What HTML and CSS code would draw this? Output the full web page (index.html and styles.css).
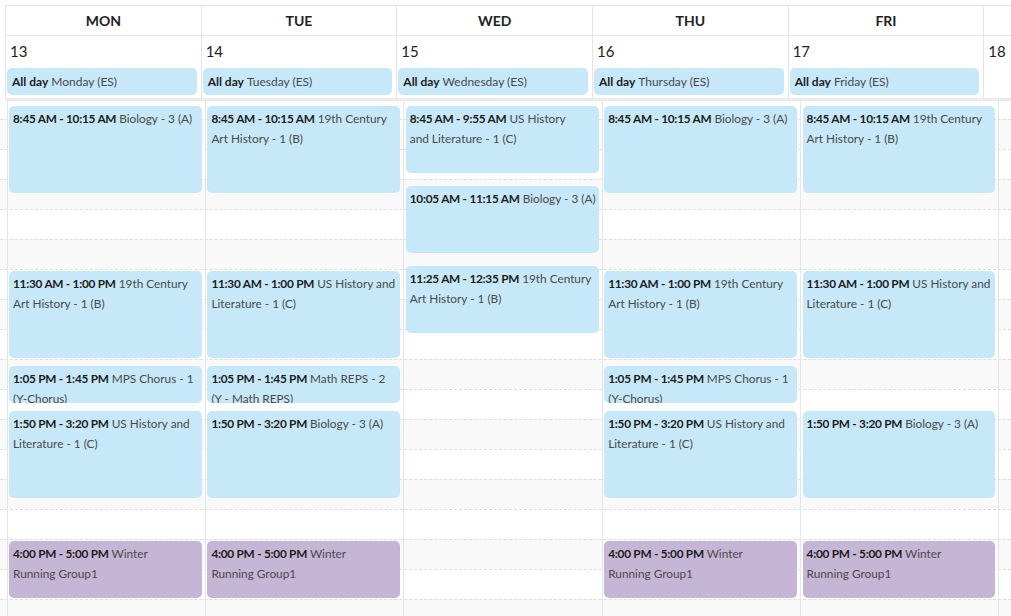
FILE: index.html
```html
<!DOCTYPE html>
<html>
<head>
<meta charset="utf-8">
<link rel="stylesheet" href="styles.css">
</head>
<body>
<div class="calendar">
  <div class="header">
    <div class="hcol">
      <div class="dayname">MON</div>
      <div class="date">13</div>
      <div class="allday"><b>All day</b> Monday (ES)</div>
    </div>
    <div class="hcol">
      <div class="dayname">TUE</div>
      <div class="date">14</div>
      <div class="allday"><b>All day</b> Tuesday (ES)</div>
    </div>
    <div class="hcol">
      <div class="dayname">WED</div>
      <div class="date">15</div>
      <div class="allday"><b>All day</b> Wednesday (ES)</div>
    </div>
    <div class="hcol">
      <div class="dayname">THU</div>
      <div class="date">16</div>
      <div class="allday"><b>All day</b> Thursday (ES)</div>
    </div>
    <div class="hcol">
      <div class="dayname">FRI</div>
      <div class="date">17</div>
      <div class="allday"><b>All day</b> Friday (ES)</div>
    </div>
    <div class="hcol">
      <div class="dayname">SAT</div>
      <div class="date">18</div>
    </div>
    <div class="hcol">
      <div class="dayname">SUN</div>
      <div class="date">19</div>
    </div>
  </div>

  <div class="body">
    <div class="slots">
      <div class="lead"></div>
      <div class="slot"></div><div class="slot"></div><div class="slot"></div><div class="slot"></div>
      <div class="slot"></div><div class="slot"></div><div class="slot"></div><div class="slot"></div>
      <div class="slot"></div><div class="slot"></div><div class="slot"></div><div class="slot"></div>
      <div class="slot"></div><div class="slot"></div><div class="slot"></div><div class="slot"></div>
      <div class="slot"></div><div class="slot"></div>
    </div>
    <div class="cols">
      <div class="col">
        <div class="ev" style="top:5px;height:87px"><b>8:45 AM - 10:15 AM</b> Biology - 3 (A)</div>
        <div class="ev" style="top:170px;height:87px"><b>11:30 AM - 1:00 PM</b> 19th Century<br>Art History - 1 (B)</div>
        <div class="ev" style="top:265px;height:37px"><b>1:05 PM - 1:45 PM</b> MPS Chorus - 1<br>(Y-Chorus)</div>
        <div class="ev" style="top:310px;height:87px"><b>1:50 PM - 3:20 PM</b> US History and<br>Literature - 1 (C)</div>
        <div class="ev purple" style="top:440px;height:57px"><b>4:00 PM - 5:00 PM</b> Winter<br>Running Group1</div>
      </div>
      <div class="col">
        <div class="ev" style="top:5px;height:87px"><b>8:45 AM - 10:15 AM</b> 19th Century<br>Art History - 1 (B)</div>
        <div class="ev" style="top:170px;height:87px"><b>11:30 AM - 1:00 PM</b> US History and<br>Literature - 1 (C)</div>
        <div class="ev" style="top:265px;height:37px"><b>1:05 PM - 1:45 PM</b> Math REPS - 2<br>(Y - Math REPS)</div>
        <div class="ev" style="top:310px;height:87px"><b>1:50 PM - 3:20 PM</b> Biology - 3 (A)</div>
        <div class="ev purple" style="top:440px;height:57px"><b>4:00 PM - 5:00 PM</b> Winter<br>Running Group1</div>
      </div>
      <div class="col">
        <div class="ev" style="top:5px;height:67px"><b>8:45 AM - 9:55 AM</b> US History<br>and Literature - 1 (C)</div>
        <div class="ev" style="top:85px;height:67px"><b>10:05 AM - 11:15 AM</b> Biology - 3 (A)</div>
        <div class="ev" style="top:165px;height:67px"><b>11:25 AM - 12:35 PM</b> 19th Century<br>Art History - 1 (B)</div>
      </div>
      <div class="col">
        <div class="ev" style="top:5px;height:87px"><b>8:45 AM - 10:15 AM</b> Biology - 3 (A)</div>
        <div class="ev" style="top:170px;height:87px"><b>11:30 AM - 1:00 PM</b> 19th Century<br>Art History - 1 (B)</div>
        <div class="ev" style="top:265px;height:37px"><b>1:05 PM - 1:45 PM</b> MPS Chorus - 1<br>(Y-Chorus)</div>
        <div class="ev" style="top:310px;height:87px"><b>1:50 PM - 3:20 PM</b> US History and<br>Literature - 1 (C)</div>
        <div class="ev purple" style="top:440px;height:57px"><b>4:00 PM - 5:00 PM</b> Winter<br>Running Group1</div>
      </div>
      <div class="col">
        <div class="ev" style="top:5px;height:87px"><b>8:45 AM - 10:15 AM</b> 19th Century<br>Art History - 1 (B)</div>
        <div class="ev" style="top:170px;height:87px"><b>11:30 AM - 1:00 PM</b> US History and<br>Literature - 1 (C)</div>
        <div class="ev" style="top:310px;height:87px"><b>1:50 PM - 3:20 PM</b> Biology - 3 (A)</div>
        <div class="ev purple" style="top:440px;height:57px"><b>4:00 PM - 5:00 PM</b> Winter<br>Running Group1</div>
      </div>
      <div class="col"></div>
      <div class="col"></div>
    </div>
  </div>
</div>
</body>
</html>
```

FILE: styles.css
```css
html, body {
  margin: 0;
  padding: 0;
  background: #ffffff;
}
body {
  width: 1011px;
  height: 616px;
  overflow: hidden;
  font-family: "Lato", "Noto Sans", sans-serif;
  color: #222;
}
.calendar {
  padding-top: 5px;
  width: 1011px;
}
.header {
  margin-left: 5px;
  display: grid;
  grid-template-columns: repeat(7, 195.67px);
  border-top: 1px solid #e4e4e4;
  border-bottom: 3px solid #ebebeb;
  width: 1370px;
}
.hcol {
  border-left: 1px solid #e4e4e4;
  display: flex;
  flex-direction: column;
  height: 92px;
}
.dayname {
  height: 29px;
  border-bottom: 1px solid #e4e4e4;
  display: flex;
  align-items: center;
  justify-content: center;
  font-weight: 700;
  font-size: 14px;
  color: #222;
  margin-left: -1px;
  padding-left: 1px;
}
.date {
  height: 30px;
  display: flex;
  align-items: center;
  padding-left: 4px;
  font-size: 15px;
  color: #222;
}
.allday {
  margin: 2px 4px 0 1px;
  height: 27px;
  border-radius: 5px;
  background: #c6e8f8;
  display: flex;
  align-items: center;
  padding-left: 5px;
  font-size: 12px;
  color: #4a4a4a;
  white-space: nowrap;
  overflow: hidden;
}
.allday b {
  color: #1c1c1c;
  font-weight: 700;
  margin-right: 3px;
}
.body {
  position: relative;
  height: 515px;
  overflow: hidden;
}
.slots {
  display: flex;
  flex-direction: column;
}
.lead {
  height: 18px;
  flex: none;
}
.slot {
  height: 30px;
  flex: none;
  box-sizing: border-box;
  border-top: 1px dashed #dedede;
}
.slot:nth-child(even) {
  background: #f9f9f9;
}
.cols {
  position: absolute;
  top: 0;
  bottom: 0;
  left: 6.5px;
  display: grid;
  grid-template-columns: repeat(7, 198.4px);
}
.col {
  position: relative;
  border-left: 1px solid #e6e6e6;
}
.ev {
  position: absolute;
  left: 1.5px;
  right: 3px;
  box-sizing: border-box;
  background: #c6e8f8;
  border-radius: 5px;
  padding: 3px 0 0 4px;
  font-size: 11.8px;
  line-height: 20px;
  color: #4a4a4a;
  white-space: nowrap;
  overflow: hidden;
}
.ev b {
  color: #1c1c1c;
  font-weight: 700;
  letter-spacing: -0.25px;
}
.ev.purple {
  background: #c6b6d6;
}
```
